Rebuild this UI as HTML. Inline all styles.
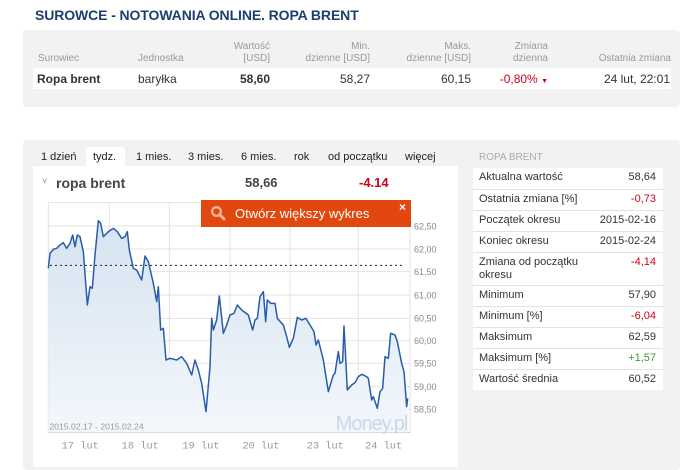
<!DOCTYPE html>
<html><head><meta charset="utf-8"><style>
*{margin:0;padding:0;box-sizing:border-box}
body{width:697px;height:467px;background:#fff;font-family:"Liberation Sans",sans-serif;position:relative;overflow:hidden;color:#333}
.a{position:absolute;white-space:nowrap}
h1{position:absolute;left:35px;top:7px;font-size:14px;font-weight:bold;color:#1c3f6e;letter-spacing:-0.1px}
.p1{position:absolute;left:23px;top:30px;width:657px;height:77px;background:#f2f2f2;border-radius:4px}
.hd{font-size:10px;color:#999;line-height:12px}
.r1{position:absolute;left:33px;top:68px;width:638px;height:21px;background:#fff}
.p2{position:absolute;left:23px;top:140px;width:657px;height:330px;background:#f2f2f2;border-radius:4px}
.cw{position:absolute;left:33px;top:166px;width:425px;height:301px;background:#fff}
.tab{font-size:11px;color:#222;top:151px}
.tb{position:absolute;left:86px;top:147px;width:39px;height:20px;background:#fff;border-radius:3px 3px 0 0}
table{position:absolute;left:473px;top:168px;width:190px;border-collapse:collapse;background:#fff;font-size:11px;color:#333}
td{padding:3px 7px 0 6px;height:21px;border-bottom:1px solid #e2e2e2;vertical-align:top;line-height:13px}
td+td{text-align:right;padding-left:0}
.red{color:#d0021b}.grn{color:#3a9a3a}
</style></head><body>
<h1>SUROWCE - NOTOWANIA ONLINE. ROPA BRENT</h1>
<div class="p1"></div>
<div class="a hd" style="left:38px;top:53px">Surowiec</div>
<div class="a hd" style="left:138px;top:53px">Jednostka</div>
<div class="a hd" style="left:220px;top:41px;width:50px;text-align:right">Wartość<br>[USD]</div>
<div class="a hd" style="left:290px;top:41px;width:80px;text-align:right">Min.<br>dzienne [USD]</div>
<div class="a hd" style="left:390px;top:41px;width:81px;text-align:right">Maks.<br>dzienne [USD]</div>
<div class="a hd" style="left:490px;top:41px;width:58px;text-align:right">Zmiana<br>dzienna</div>
<div class="a hd" style="left:580px;top:53px;width:91px;text-align:right">Ostatnia zmiana</div>
<div class="r1"></div>
<div class="a" style="left:37px;top:72px;font-size:12px;font-weight:bold">Ropa brent</div>
<div class="a" style="left:138px;top:72px;font-size:12px">baryłka</div>
<div class="a" style="left:220px;top:72px;width:50px;text-align:right;font-size:12px;font-weight:bold">58,60</div>
<div class="a" style="left:290px;top:72px;width:80px;text-align:right;font-size:12px">58,27</div>
<div class="a" style="left:390px;top:72px;width:81px;text-align:right;font-size:12px">60,15</div>
<div class="a red" style="left:490px;top:72px;width:58px;text-align:right;font-size:12px">-0,80% <span style="font-size:7px">▼</span></div>
<div class="a" style="left:580px;top:72px;width:90px;text-align:right;font-size:12px">24 lut, 22:01</div>

<div class="p2"></div>
<div class="tb"></div>
<div class="cw"></div>
<div class="a tab" style="left:41px">1 dzień</div>
<div class="a tab" style="left:93px">tydz.</div>
<div class="a tab" style="left:136px">1 mies.</div>
<div class="a tab" style="left:188px">3 mies.</div>
<div class="a tab" style="left:241px">6 mies.</div>
<div class="a tab" style="left:294px">rok</div>
<div class="a tab" style="left:328px">od początku</div>
<div class="a tab" style="left:405px">więcej</div>
<div class="a" style="left:479px;top:152px;font-size:10px;color:#aaa">ROPA BRENT</div>
<div class="a" style="left:42px;top:176px;font-size:9px;color:#888">˅</div>
<div class="a" style="left:56px;top:175px;font-size:14px;font-weight:bold;color:#444">ropa brent</div>
<div class="a" style="left:245px;top:175px;font-size:13px;font-weight:bold;color:#444">58,66</div>
<div class="a red" style="left:359px;top:175px;font-size:13px;font-weight:bold">-4.14</div>

<svg class="a" style="left:30px;top:190px" width="420" height="277" viewBox="0 0 1260 831">
<defs><linearGradient id="g" x1="0" y1="0" x2="0" y2="1"><stop offset="0" stop-color="#d5e3f1"/><stop offset="1" stop-color="#f3f7fb"/></linearGradient></defs>
<g stroke="#e3e3e3" stroke-width="3">
<line x1="55" y1="38" x2="1140" y2="38"/>
<line x1="55" y1="108" x2="1140" y2="108"/><line x1="55" y1="177" x2="1140" y2="177"/><line x1="55" y1="245" x2="1140" y2="245"/><line x1="55" y1="315" x2="1140" y2="315"/><line x1="55" y1="385" x2="1140" y2="385"/><line x1="55" y1="452" x2="1140" y2="452"/><line x1="55" y1="520" x2="1140" y2="520"/><line x1="55" y1="590" x2="1140" y2="590"/><line x1="55" y1="658" x2="1140" y2="658"/>
<line x1="55" y1="38" x2="55" y2="727"/><line x1="238" y1="38" x2="238" y2="727"/><line x1="418" y1="38" x2="418" y2="727"/><line x1="600" y1="38" x2="600" y2="727"/><line x1="780" y1="38" x2="780" y2="727"/><line x1="985" y1="38" x2="985" y2="727"/><line x1="1140" y1="38" x2="1140" y2="727"/>
</g>
<line x1="55" y1="727" x2="1140" y2="727" stroke="#bbb" stroke-width="3"/>
<polygon fill="url(#g)" points="55,727 55,235 60,190 70,178 80,175 90,165 100,158 110,175 120,160 128,135 135,170 142,135 150,140 160,185 172,345 180,290 187,295 195,195 205,92 212,100 220,140 235,125 250,115 262,125 275,145 285,140 292,125 298,180 310,235 320,240 335,270 345,198 355,215 362,245 370,280 380,335 385,290 392,420 400,415 408,510 420,505 440,510 455,500 470,520 485,555 495,510 505,540 515,580 528,665 540,530 545,385 550,420 560,390 568,318 580,430 590,405 600,375 612,370 622,345 635,360 655,375 668,420 675,390 682,385 690,320 700,305 707,395 712,330 722,340 735,340 742,385 760,405 770,440 778,472 790,445 802,382 815,390 828,385 840,405 852,425 858,465 865,450 880,510 895,605 910,555 915,550 925,485 930,520 938,515 942,408 952,600 965,585 975,578 985,560 995,553 1010,560 1015,565 1025,630 1030,620 1042,655 1050,605 1058,595 1065,500 1075,505 1082,430 1095,435 1102,455 1115,520 1122,545 1130,650 1133,625 1133,727"/>
<line x1="60" y1="226" x2="1125" y2="226" stroke="#222" stroke-width="3" stroke-dasharray="6,9"/>
<polyline fill="none" stroke="#2a5ca8" stroke-width="4.5" stroke-linejoin="round" points="55,235 60,190 70,178 80,175 90,165 100,158 110,175 120,160 128,135 135,170 142,135 150,140 160,185 172,345 180,290 187,295 195,195 205,92 212,100 220,140 235,125 250,115 262,125 275,145 285,140 292,125 298,180 310,235 320,240 335,270 345,198 355,215 362,245 370,280 380,335 385,290 392,420 400,415 408,510 420,505 440,510 455,500 470,520 485,555 495,510 505,540 515,580 528,665 540,530 545,385 550,420 560,390 568,318 580,430 590,405 600,375 612,370 622,345 635,360 655,375 668,420 675,390 682,385 690,320 700,305 707,395 712,330 722,340 735,340 742,385 760,405 770,440 778,472 790,445 802,382 815,390 828,385 840,405 852,425 858,465 865,450 880,510 895,605 910,555 915,550 925,485 930,520 938,515 942,408 952,600 965,585 975,578 985,560 995,553 1010,560 1015,565 1025,630 1030,620 1042,655 1050,605 1058,595 1065,500 1075,505 1082,430 1095,435 1102,455 1115,520 1122,545 1130,650 1133,625"/>
<text x="1132" y="720" text-anchor="end" font-family="Liberation Sans" font-size="60" fill="#c9d8ea" letter-spacing="-3">Money.pl</text>
<text x="58" y="718" font-family="Liberation Sans" font-size="26" fill="#999">2015.02.17 - 2015.02.24</text>
<g font-family="Liberation Sans" font-size="27" fill="#888">
<text x="1152" y="118">62,50</text><text x="1152" y="187">62,00</text><text x="1152" y="255">61,50</text><text x="1152" y="325">61,00</text><text x="1152" y="395">60,50</text><text x="1152" y="462">60,00</text><text x="1152" y="530">59,50</text><text x="1152" y="600">59,00</text><text x="1152" y="668">58,50</text>
</g>
<g font-family="Liberation Mono" font-size="31" fill="#999">
<text x="95" y="775">17 lut</text><text x="275" y="775">18 lut</text><text x="457" y="775">19 lut</text><text x="637" y="775">20 lut</text><text x="830" y="775">23 lut</text><text x="1005" y="775">24 lut</text>
</g>
</svg>

<div class="a" style="left:201px;top:200px;width:210px;height:27px;background:#e2470f"></div>
<svg class="a" style="left:210px;top:205px" width="16" height="16" viewBox="0 0 16 16"><circle cx="6.5" cy="6.5" r="4.3" fill="none" stroke="#f6b592" stroke-width="2.4"/><line x1="9.7" y1="9.7" x2="14" y2="14" stroke="#f6b592" stroke-width="3" stroke-linecap="round"/></svg>
<div class="a" style="left:235px;top:206px;font-size:13px;color:#fff">Otwórz większy wykres</div>
<div class="a" style="left:399px;top:200px;font-size:12px;color:#fff;font-weight:bold">×</div>

<table>
<tr><td>Aktualna wartość</td><td>58,64</td></tr>
<tr><td>Ostatnia zmiana [%]</td><td class="red">-0,73</td></tr>
<tr><td>Początek okresu</td><td>2015-02-16</td></tr>
<tr><td>Koniec okresu</td><td>2015-02-24</td></tr>
<tr><td style="height:33px">Zmiana od początku<br>okresu</td><td class="red">-4,14</td></tr>
<tr><td>Minimum</td><td>57,90</td></tr>
<tr><td>Minimum [%]</td><td class="red">-6,04</td></tr>
<tr><td>Maksimum</td><td>62,59</td></tr>
<tr><td>Maksimum [%]</td><td class="grn">+1,57</td></tr>
<tr><td style="border:0">Wartość średnia</td><td style="border:0">60,52</td></tr>
</table>
</body></html>
